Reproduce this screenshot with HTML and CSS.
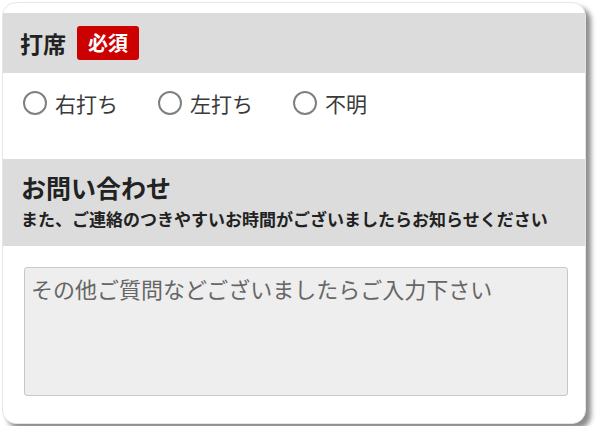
FILE: index.html
```html
<!DOCTYPE html>
<html lang="ja">
<head>
    <meta charset="UTF-8">
    <title>お問い合わせフォーム</title>
    <link rel="stylesheet" href="styles.css">
</head>
<body>
    <div class="card">
        <div class="field-head">
            <span class="field-title">打席</span>
            <span class="required">必須</span>
        </div>
        <div class="radio-row">
            <label class="radio"><span class="circle"></span>右打ち</label>
            <label class="radio"><span class="circle"></span>左打ち</label>
            <label class="radio"><span class="circle"></span>不明</label>
        </div>

        <div class="field-head tall">
            <div class="field-title big">お問い合わせ</div>
            <div class="field-note">また、ご連絡のつきやすいお時間がございましたらお知らせください</div>
        </div>
        <div class="message">
            <textarea placeholder="その他ご質問などございましたらご入力下さい"></textarea>
        </div>
    </div>
</body>
</html>
```

FILE: styles.css
```css
body {
    margin: 0;
    padding: 2px;
    background: #fff;
    font-family: "Noto Sans CJK JP", "Noto Sans", sans-serif;
    color: #333;
}

.card {
    width: 582px;
    height: 410px;
    padding-top: 10px;
    background: #fff;
    border: 1px solid #e6e6e6;
    border-radius: 14px;
    box-shadow: 5px 5px 5px rgba(0, 0, 0, 0.45);
}

.field-head {
    height: 60px;
    padding: 0 17px;
    background: #dcdcdc;
    display: flex;
    align-items: center;
    gap: 11px;
}

.field-head.tall {
    height: 87px;
    padding: 0 18px;
    flex-direction: column;
    align-items: flex-start;
    justify-content: center;
    gap: 0;
}

.field-title {
    font-size: 23px;
    font-weight: bold;
    color: #222;
}

.field-title.big {
    font-size: 25px;
    line-height: 34px;
    margin: -5px 0 3px;
}

.field-note {
    font-size: 17px;
    font-weight: bold;
    color: #222;
    line-height: 24px;
}

.required {
    background: #cc0000;
    color: #fff;
    font-size: 20px;
    font-weight: bold;
    line-height: 34px;
    padding: 0 11px;
    border-radius: 3px;
}

.radio-row {
    height: 86px;
    padding: 16px 0 0 20px;
    box-sizing: border-box;
    display: flex;
    align-items: flex-start;
}

.radio {
    display: flex;
    align-items: center;
    font-size: 21px;
    line-height: 28px;
    color: #3a3a3a;
    margin-right: 40px;
}

.circle {
    width: 20px;
    height: 20px;
    border: 2px solid #808080;
    border-radius: 50%;
    margin-right: 8px;
}

.message {
    padding: 21px 17px 0 21px;
}

textarea {
    display: block;
    width: 544px;
    height: 129px;
    box-sizing: border-box;
    margin: 0;
    padding: 5px 6px;
    background: #eee;
    border: 1px solid #c8c8c8;
    border-radius: 3px;
    font-family: "Noto Sans CJK JP", "Noto Sans", sans-serif;
    font-size: 22px;
    line-height: 30px;
    color: #333;
    resize: none;
}

textarea::placeholder {
    color: #666;
}
```
